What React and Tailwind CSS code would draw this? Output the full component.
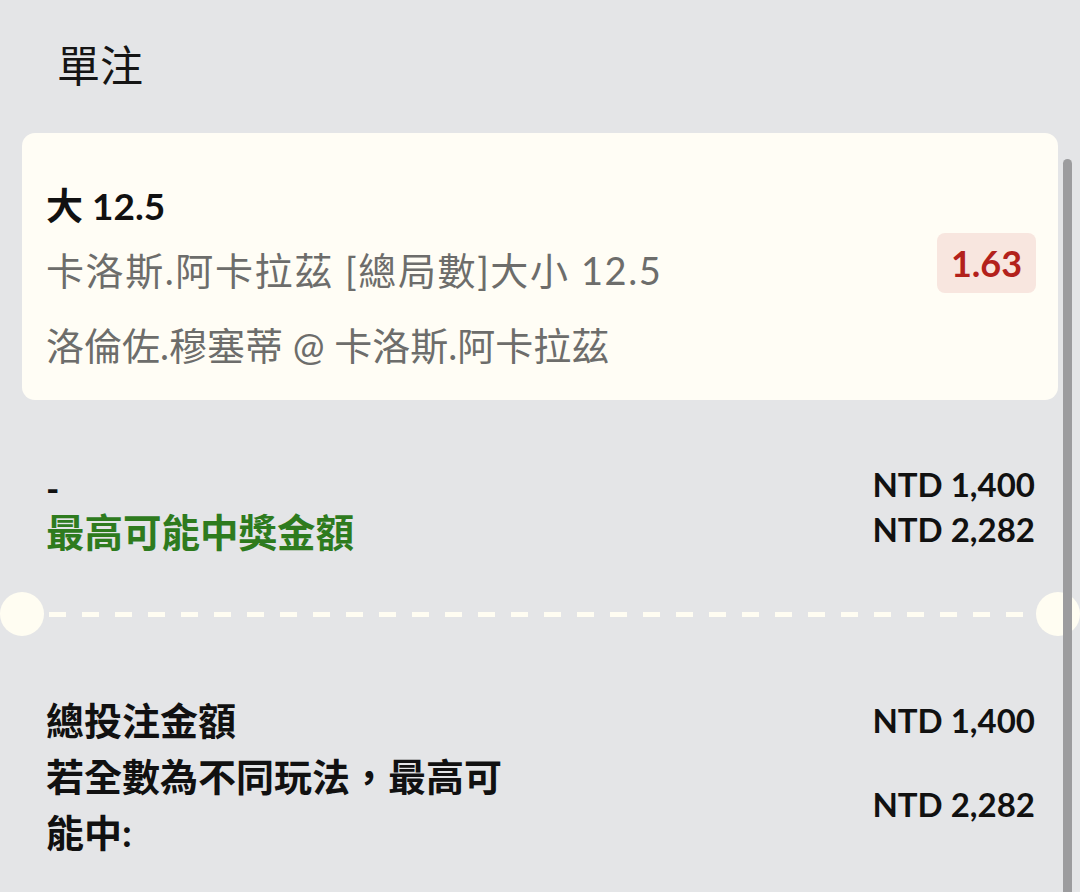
import React from 'react'

const font = "font-['Lato','Noto_Sans_CJK_TC','Noto_Sans',sans-serif]"

function Row({ label, value, className = '' }) {
  return (
    <div className={`flex items-center justify-between ${className}`}>
      <div className="w-[470px] text-[38px] font-bold leading-[56px] text-[#111]">{label}</div>
      <div className="text-[33px] font-bold leading-[56px] text-[#111]">{value}</div>
    </div>
  )
}

export default function App() {
  return (
    <main className={`relative h-[892px] w-[1080px] overflow-hidden bg-[#e4e5e7] ${font}`}>
      <header className="flex h-[133px] items-center pl-[57px]">
        <h1 className="text-[43px] font-normal text-[#151515]">單注</h1>
      </header>

      <section className="mx-[22px] flex items-start justify-between rounded-[13px] bg-[#fffdf5] pl-[24px] pr-[22px]">
        <div className="pb-[32px] pt-[50px]">
          <p className="text-[37px] font-bold leading-[46px] text-[#111]">大 12.5</p>
          <p className="mt-[18px] text-[38px] tracking-[1.6px] leading-[46px] text-[#6d6d6b]">卡洛斯.阿卡拉茲 [總局數]大小 12.5</p>
          <p className="mt-[29px] text-[38px] leading-[46px] text-[#6d6d6b]">洛倫佐.穆塞蒂 @ 卡洛斯.阿卡拉茲</p>
        </div>
        <span className="mt-[100px] flex h-[60px] w-[99px] items-center justify-center rounded-[8px] bg-[#f8e6df] text-[36px] font-bold text-[#b3211b]">
          1.63
        </span>
      </section>

      <div className="mt-[62px] flex items-start justify-between pl-[46px] pr-[45px]">
        <div className="pt-1">
          <p className="text-[36px] font-bold leading-[44px] text-[#111]">-</p>
          <p className="text-[38.5px] font-bold leading-[44px] text-[#2e7b1e]">最高可能中獎金額</p>
        </div>
        <div className="text-right text-[33px] font-bold leading-[45px] text-[#111]">
          <p>NTD 1,400</p>
          <p>NTD 2,282</p>
        </div>
      </div>

      <div className="mt-[38px] flex h-[44px] items-center">
        <span className="h-[44px] w-[44px] shrink-0 rounded-full bg-[#fffdf2]" />
        <span className="mx-[5px] h-[5px] flex-1 bg-[repeating-linear-gradient(90deg,#fffdf2_0_17px,transparent_17px_33px)]" />
        <span className="h-[44px] w-[44px] shrink-0 rounded-full bg-[#fffdf2]" />
      </div>

      <div className="mt-[56px] pl-[46px] pr-[45px]">
        <Row label="總投注金額" value="NTD 1,400" />
        <Row label="若全數為不同玩法，最高可能中:" value="NTD 2,282" />
      </div>

      <div className="absolute bottom-0 right-[8px] top-[159px] w-[9px] rounded-t-full bg-[#9c9c9e]" />
    </main>
  )
}
